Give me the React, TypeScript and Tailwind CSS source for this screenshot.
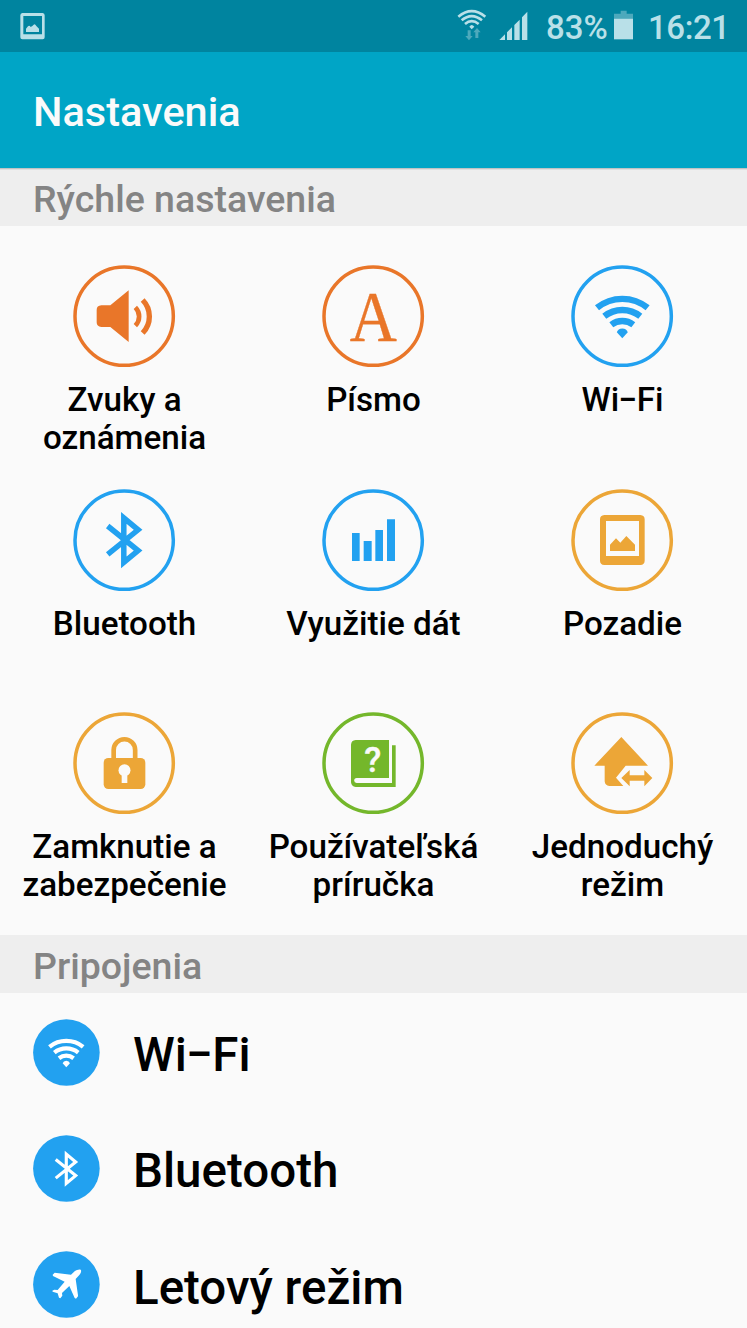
import type { ReactNode } from "react";

const ORANGE = "#e97629";
const BLUE = "#22a1f0";
const YELLOW = "#eca637";
const GREEN = "#74b72b";

function WifiShape({ color }: { color: string }) {
  return (
    <g fill="none" stroke={color} strokeWidth="6.400">
      <path d="M35 51.800A40.200 40.200 0 0 1 85.600 51.800" />
      <path d="M42.300 60.300A29 29 0 0 1 78.300 60.300" />
      <path d="M49.300 68.700A18.200 18.200 0 0 1 71.300 68.700" />
      <path
        d="M60.300 82.200L54.800 76.200Q56 72.400 60.300 72.400Q64.600 72.400 65.800 76.200Z"
        fill={color}
        stroke="none"
      />
    </g>
  );
}

function BluetoothShape({ color, width }: { color: string; width: number }) {
  return (
    <path
      d="M43.700 46L74.100 70.500L59.800 82.400V37.800L74.100 49.800L43.700 74.300"
      fill="none"
      stroke={color}
      strokeWidth={width}
      strokeMiterlimit="10"
    />
  );
}

function WifiLabel() {
  return (
    <>
      Wi<span className="-mx-[0.055em] inline-block scale-x-[0.84]">–</span>Fi
    </>
  );
}

type Quick = { id: string; label: ReactNode[]; color: string; icon: ReactNode };

const quickSettings: Quick[] = [
  {
    id: "sound",
    label: ["Zvuky a", "oznámenia"],
    color: ORANGE,
    icon: (
      <>
        <path
          d="M112 148H139L194 103V258L139 213H112Q98 212 98 199V162Q98 149 112 148Z"
          fill={ORANGE}
        />
        <g fill="none" stroke={ORANGE}>
          <path d="M214 154A39 39 0 0 1 214 209" strokeWidth="14" />
          <path d="M236 132A71 71 0 0 1 236 231" strokeWidth="16" />
        </g>
      </>
    ),
  },
  {
    id: "font",
    label: ["Písmo"],
    color: ORANGE,
    icon: (
      <text
        transform="translate(181 253.500) scale(.96 1.050)"
        textAnchor="middle"
        fontFamily="Liberation Serif, serif"
        fontWeight="400"
        fontSize="204"
        fill={ORANGE}
        stroke={ORANGE}
        strokeWidth="1"
      >
        A
      </text>
    ),
  },
  {
    id: "wifi",
    label: [<WifiLabel />],
    color: BLUE,
    icon: (
      <g transform="scale(3)">
        <WifiShape color={BLUE} />
      </g>
    ),
  },
  {
    id: "bluetooth",
    label: ["Bluetooth"],
    color: BLUE,
    icon: (
      <g transform="scale(3)">
        <BluetoothShape color={BLUE} width={5.5} />
      </g>
    ),
  },
  {
    id: "data",
    label: ["Využitie dát"],
    color: BLUE,
    icon: (
      <path
        d="M117 159H140V243H117ZM152 183H176V243H152ZM187 150H210V243H187ZM222 118H246V243H222Z"
        fill={BLUE}
      />
    ),
  },
  {
    id: "wallpaper",
    label: ["Pozadie"],
    color: YELLOW,
    icon: (
      <path
        fillRule="evenodd"
        d="M127 105H235Q248 106 248 118V242Q248 254 235 255H127Q114 254 114 242V118Q114 106 127 105ZM132 123V228H231V123ZM144 213V194L162 175L175 188L193 168L219 194V213Z"
        fill={YELLOW}
      />
    ),
  },
  {
    id: "lock",
    label: ["Zamknutie a", "zabezpečenie"],
    color: YELLOW,
    icon: (
      <>
        <path
          d="M149 170V141A32.200 32.200 0 0 1 213.500 141V170"
          fill="none"
          stroke={YELLOW}
          strokeWidth="14"
        />
        <rect x="119" y="165" width="125" height="93" rx="14" fill={YELLOW} />
        <circle cx="181.500" cy="202" r="18" fill="#fafafa" />
        <rect x="173" y="210" width="17" height="30" fill="#fafafa" />
      </>
    ),
  },
  {
    id: "manual",
    label: ["Používateľská", "príručka"],
    color: GREEN,
    icon: (
      <>
        <path
          d="M128 111H228V225H131A7.500 7.500 0 0 0 131 240H237V127H248V252H128Q115 250 114 238V125Q115 112 128 111Z"
          fill={GREEN}
        />
        <text
          x="179"
          y="207"
          textAnchor="middle"
          fontFamily="Roboto, sans-serif"
          fontWeight="500"
          fontSize="105"
          fill="#fafafa"
          stroke="#fafafa"
          strokeWidth="1"
        >
          ?
        </text>
      </>
    ),
  },
  {
    id: "easy",
    label: ["Jednoduchý", "režim"],
    color: YELLOW,
    icon: (
      <g fill={YELLOW}>
        <path d="M178 102L258 188H191L162 224L184 249H142Q129 248 128 235V188H97Z" />
        <path d="M178 225L203 201V217H247V201L271 225L247 250V233H203V250Z" />
      </g>
    ),
  },
];

const connections: { id: string; label: ReactNode; icon: ReactNode }[] = [
  {
    id: "wifi",
    label: <WifiLabel />,
    icon: (
      <g transform="translate(-6.800 -6.500) scale(.665)">
        <WifiShape color="#fff" />
      </g>
    ),
  },
  {
    id: "bluetooth",
    label: "Bluetooth",
    icon: (
      <g transform="translate(-6 -5.700) scale(.657)">
        <BluetoothShape color="#fff" width={4.8} />
      </g>
    ),
  },
  {
    id: "airplane",
    label: "Letový režim",
    icon: (
      <path
        transform="translate(-13 -247) scale(.3333)"
        d="M182 797C185 800 183 808 178 813L167 825L174 874V877L168 884L164 882L148 846L126 867L127 875L121 883L117 881L113 868L98 863L97 860L103 857L113 858L134 833L99 816L98 812L104 806L153 812L164 802C170 797 178 795 182 797Z"
        fill="#fff"
      />
    ),
  },
];

function StatusBar() {
  return (
    <div className="flex h-[52px] items-center bg-[#00849f] pl-[18px] text-[33px] text-[#b9e0e8]">
      <svg className="h-[52px] w-[29px]" viewBox="54 0 87 156">
        <path
          fillRule="evenodd"
          d="M67 39H128Q134 40 134 46V112Q134 118 128 118H67Q61 118 61 112V46Q61 40 67 39ZM70 48V103H126V48ZM78 96V86L84 79Q88 75 92 81L97 78L101 74Q105 71 109 78L117 86V96Z"
          fill="currentColor"
        />
      </svg>
      <svg className="ml-[409px] h-[52px] w-[32px]" viewBox="48 0 96 156">
        <g fill="none" stroke="currentColor" strokeWidth="8">
          <path d="M55 50Q95 17 136 50" />
          <path d="M65 61Q95 36 126 61" />
          <path d="M75 72Q95 55 116 72" />
        </g>
        <path d="M88 80Q95 70 103 80L95 88Z" fill="currentColor" />
        <path
          d="M83 91H92V108H98L87 121L76 108H83ZM111 84L122 97H115V114H106V97H100Z"
          fill="#4da9bc"
        />
      </svg>
      <svg className="ml-[10px] h-[52px] w-[32px]" viewBox="174 0 96 156">
        <path
          d="M178 120L195 103V120ZM201 97L216 82V120H201ZM223 75L239 59V120H223ZM246 52L262 35V120H246Z"
          fill="currentColor"
        />
      </svg>
      <span className="ml-[16px] w-[66px] pt-[3px]">83%</span>
      <svg className="h-[52px] w-[24px]" viewBox="516 0 72 156">
        <path d="M542 32H560V41H579V56H522V41H542Z" fill="#4da9bc" />
        <path d="M522 56H579V118H522Z" fill="currentColor" />
      </svg>
      <span className="ml-[12px] pt-[3px] tracking-[-0.4px]">16:21</span>
    </div>
  );
}

function SectionTitle({ children }: { children: ReactNode }) {
  return (
    <h2 className="flex h-[58px] items-center pt-[4px] pl-[33px] text-[37.5px] text-[#848484]">
      {children}
    </h2>
  );
}

function App() {
  return (
    <div className="h-[1328px] w-[747px] overflow-hidden bg-[#fafafa] font-['Roboto',sans-serif] font-medium whitespace-nowrap text-black">
      <StatusBar />
      <header className="flex h-[116px] items-center bg-[#00a5c6] pt-[4px] pl-[33px] text-[41.5px] text-[#fafafa]">
        <h1>Nastavenia</h1>
      </header>
      <div className="bg-[#eeeeee] shadow-[inset_0_1px_0_#bfc3c4,inset_0_2px_0_#dfdfdf]">
        <SectionTitle>Rýchle nastavenia</SectionTitle>
      </div>
      <div className="grid h-[709px] grid-cols-[249px_249px_249px] grid-rows-[224px_223px_223px] pt-[39px]">
        {quickSettings.map((item) => (
          <div
            key={item.id}
            className="flex flex-col items-center text-center text-[33.2px] leading-[38px]"
          >
            <svg className="h-[103px] w-[103px]" viewBox="27 27 309 309">
              <circle
                cx="180.500"
                cy="180.500"
                r="147.500"
                fill="none"
                stroke={item.color}
                strokeWidth="10.500"
              />
              {item.icon}
            </svg>
            <div className="mt-[13px]">
              {item.label.map((line, i) => (
                <p key={i}>{line}</p>
              ))}
            </div>
          </div>
        ))}
      </div>
      <div className="bg-[#eeeeee]">
        <SectionTitle>Pripojenia</SectionTitle>
      </div>
      <div className="pt-[1px]">
        {connections.map((item) => (
          <div
            key={item.id}
            className="flex h-[116.300px] items-center gap-[33px] pl-[33px] text-[47.5px]"
          >
            <svg className="h-[67px] w-[67px]" viewBox="0 0 67 67">
              <circle cx="33.400" cy="33.500" r="33.300" fill={BLUE} />
              {item.icon}
            </svg>
            <span className="pt-[7px]">{item.label}</span>
          </div>
        ))}
      </div>
    </div>
  );
}

export default App;
